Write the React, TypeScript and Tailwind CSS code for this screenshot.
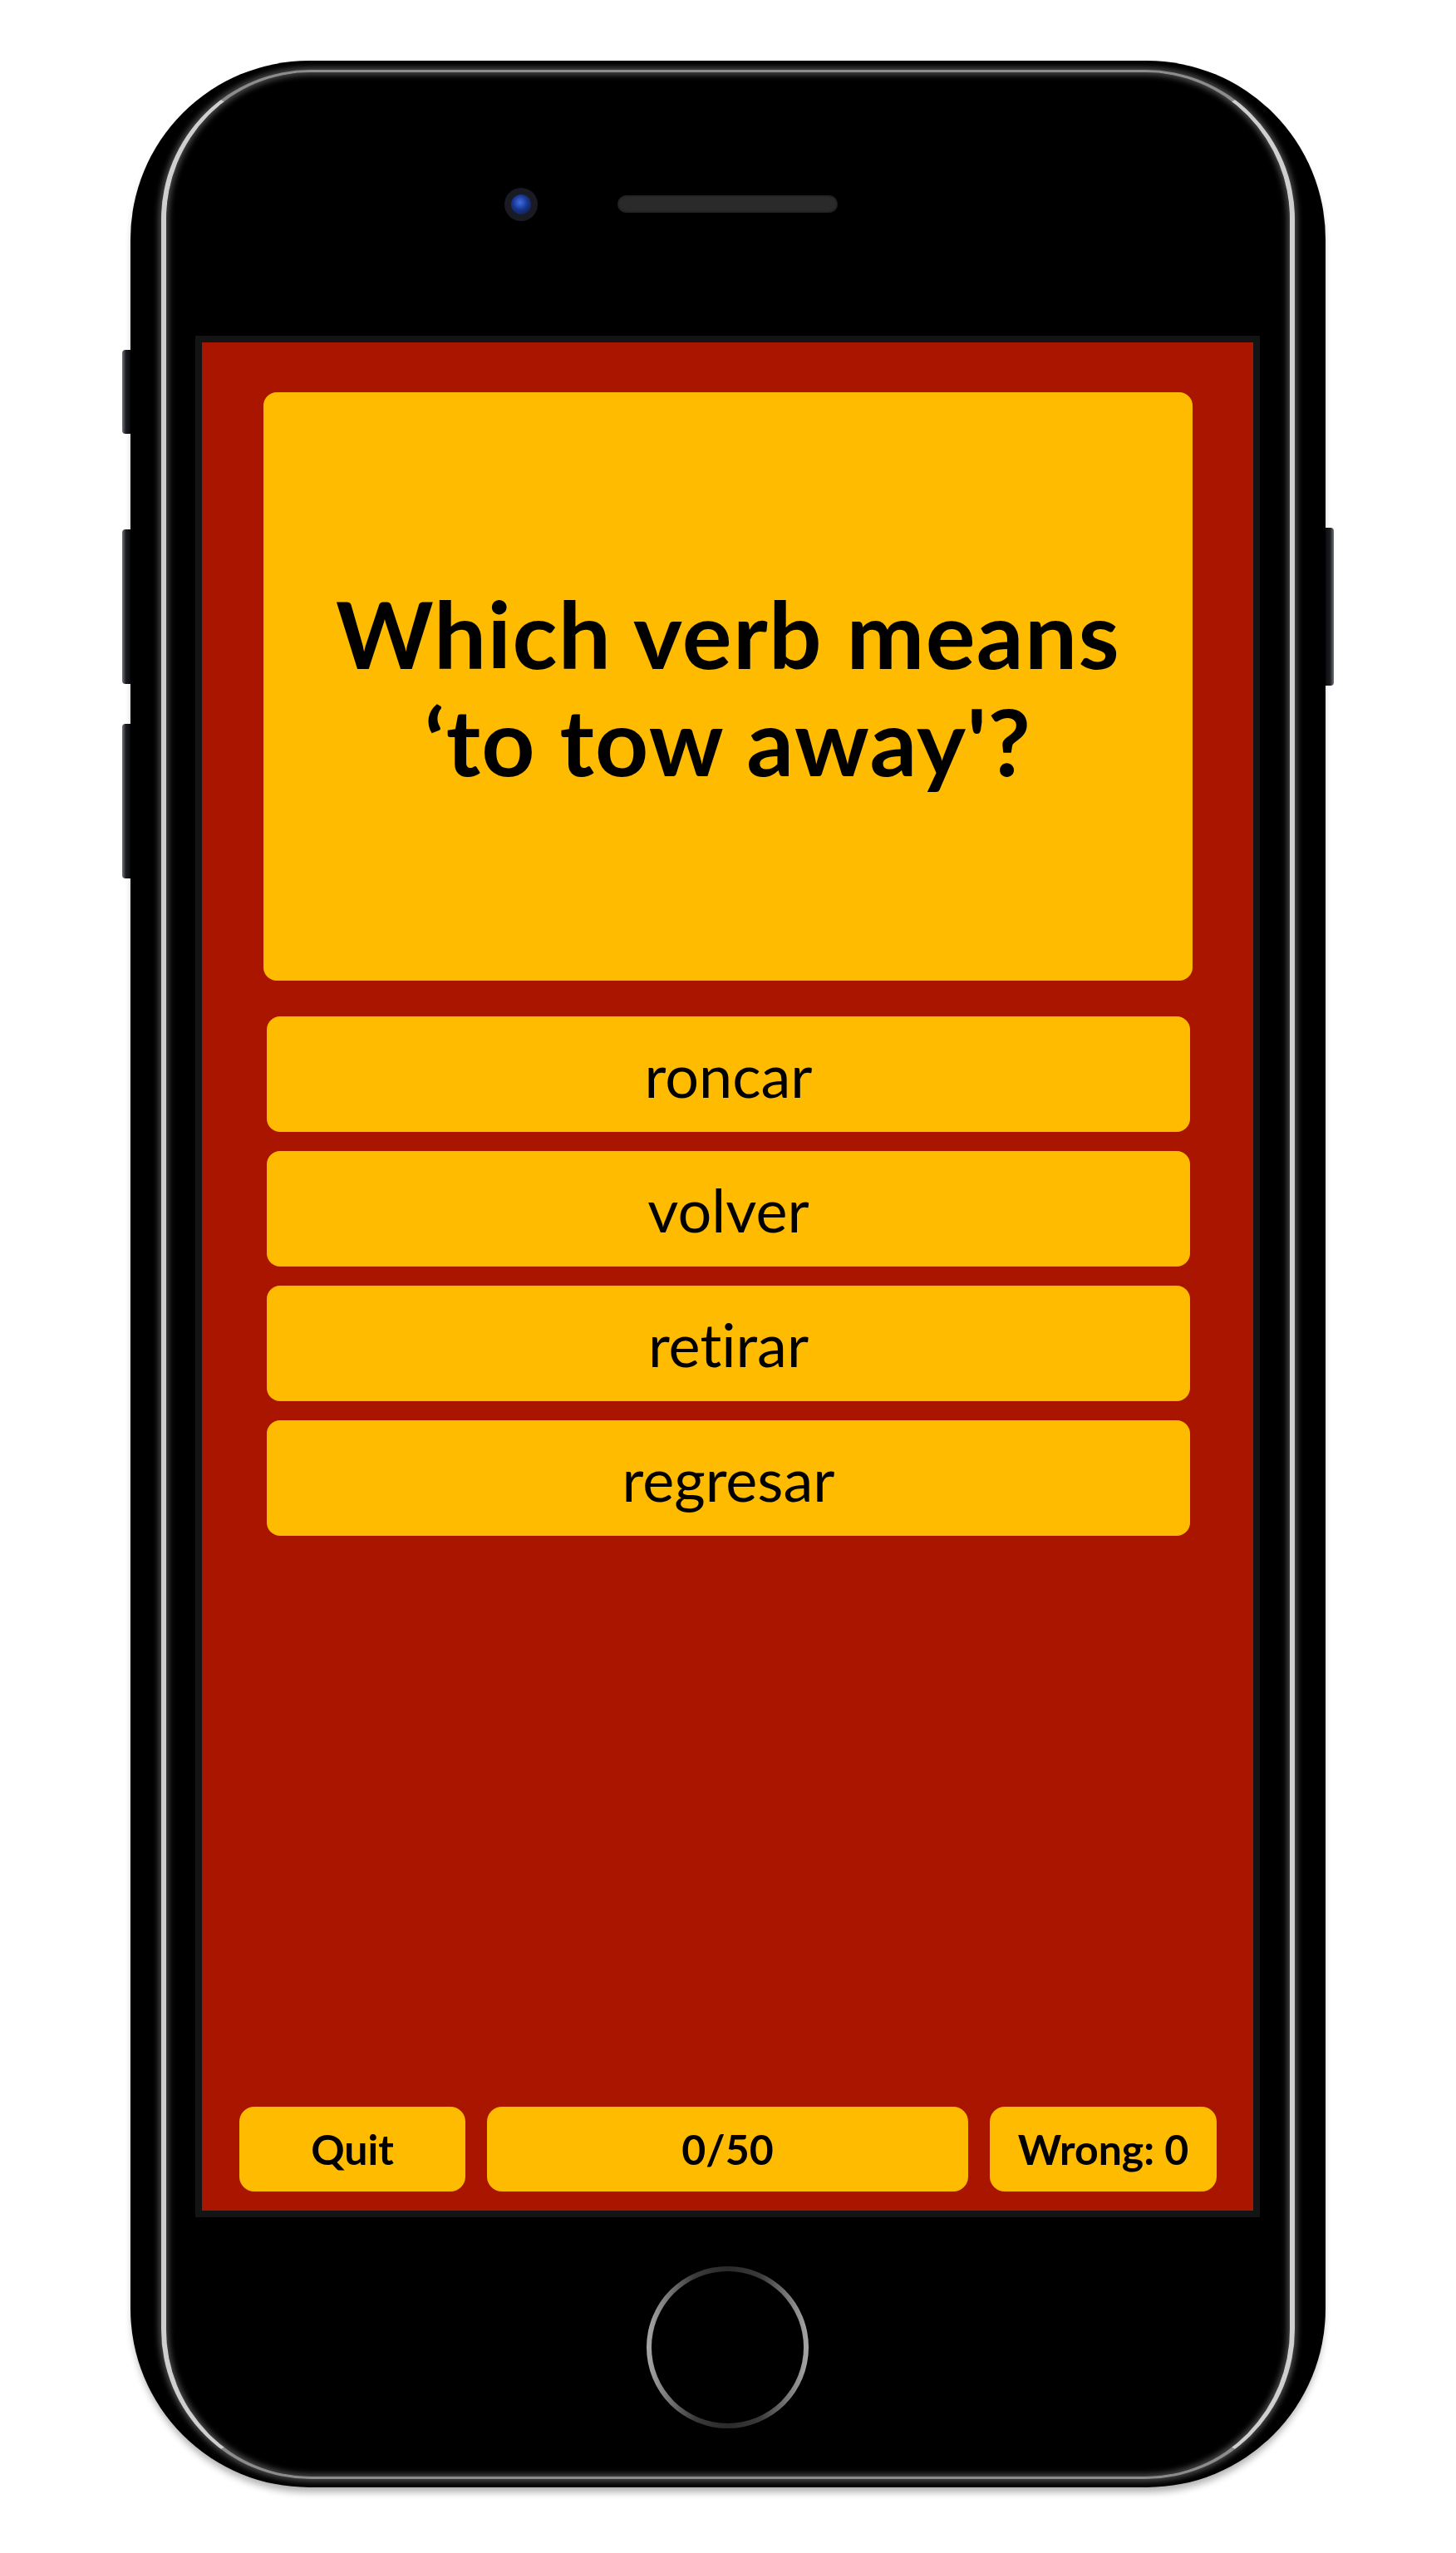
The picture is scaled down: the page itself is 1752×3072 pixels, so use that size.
import React from "react";

const answers = ["roncar", "volver", "retirar", "regresar"];

export default function App() {
  return (
    <div className="w-[1752px] h-[3072px] bg-white flex items-start pt-[73px] pl-[147px] font-['Lato','Noto_Sans',sans-serif] text-black [font-variant-ligatures:none]">
      {/* volume / mute keys */}
      <div className="w-[10px] flex flex-col pt-[348px]">
        <div className="h-[101px] rounded-l-[4px] bg-[linear-gradient(to_right,#70737a,#1c1e22_45%,#0b0c0e)]" />
        <div className="h-[186px] mt-[115px] rounded-l-[4px] bg-[linear-gradient(to_right,#70737a,#1c1e22_45%,#0b0c0e)]" />
        <div className="h-[186px] mt-[48px] rounded-l-[4px] bg-[linear-gradient(to_right,#70737a,#1c1e22_45%,#0b0c0e)]" />
      </div>

      {/* phone body */}
      <div className="w-[1438px] h-[2920px] rounded-[215px] bg-black px-[37px] pt-[11px] pb-[10px] shadow-[0_8px_8px_-2px_rgba(0,0,0,0.3)]">
        <div className="h-full rounded-[180px] border-x-[6px] border-y-[3px] border-x-[#cfcfcf] border-y-[#8c8c8c] bg-black shadow-[0_0_7px_3px_#4a4a4a,inset_0_0_7px_3px_#4a4a4a] flex flex-col pl-[35px] pr-[36px]">
          {/* earpiece row */}
          <div className="h-[317px] shrink-0 grid grid-cols-[1fr_auto_1fr] items-center">
            <div className="justify-self-end mr-[96px] w-[40px] h-[40px] rounded-full bg-[#1a1b22] flex items-center justify-center">
              <div className="w-[24px] h-[24px] rounded-full bg-[radial-gradient(circle_at_45%_40%,#3f6fe0_0%,#18358f_45%,#0c1430_100%)]" />
            </div>
            <div className="w-[265px] h-[21px] rounded-full bg-[#2a2a2a] shadow-[inset_0_0_3px_#111]" />
            <div />
          </div>

          {/* screen */}
          <div className="h-[2264px] shrink-0 border-[8px] border-[#141414] bg-[#aa1500] flex flex-col">
            <div className="pt-[60px] pl-[74px] pr-[73px] flex flex-col">
              <div className="h-[708px] rounded-[16px] bg-[#ffbb00] flex items-center justify-center text-center">
                <p className="text-[112px] leading-[129px] font-bold tracking-[0.012em]">
                  Which verb means
                  <br />
                  ‘to tow away'?
                </p>
              </div>
              <div className="mt-[43px] pl-[4px] pr-[3px] flex flex-col gap-[23px]">
                {answers.map((a) => (
                  <div
                    key={a}
                    className="h-[139px] rounded-[16px] bg-[#ffbb00] flex items-center justify-center text-[72px] leading-none"
                  >
                    {a}
                  </div>
                ))}
              </div>
            </div>

            <div className="mt-auto pl-[45px] pr-[44px] pb-[23px] grid grid-cols-[272px_1fr_273px] gap-[26px] text-[50px] font-bold leading-none">
              <div className="h-[102px] rounded-[18px] bg-[#ffbb00] flex items-center justify-center">Quit</div>
              <div className="h-[102px] rounded-[18px] bg-[#ffbb00] flex items-center justify-center">0/50</div>
              <div className="h-[102px] rounded-[18px] bg-[#ffbb00] flex items-center justify-center">Wrong: 0</div>
            </div>
          </div>

          {/* home button */}
          <div className="flex-1 flex items-center justify-center">
            <div className="w-[195px] h-[195px] rounded-full p-[6px] bg-[linear-gradient(to_right,#a8a8a8,#3a3a3a_30%,#2a2a2a_50%,#3a3a3a_70%,#a8a8a8)]">
              <div className="w-full h-full rounded-full bg-black" />
            </div>
          </div>
        </div>
      </div>

      {/* power key */}
      <div className="w-[10px] pt-[562px]">
        <div className="h-[190px] rounded-r-[4px] bg-[linear-gradient(to_left,#70737a,#1c1e22_45%,#0b0c0e)]" />
      </div>
    </div>
  );
}
